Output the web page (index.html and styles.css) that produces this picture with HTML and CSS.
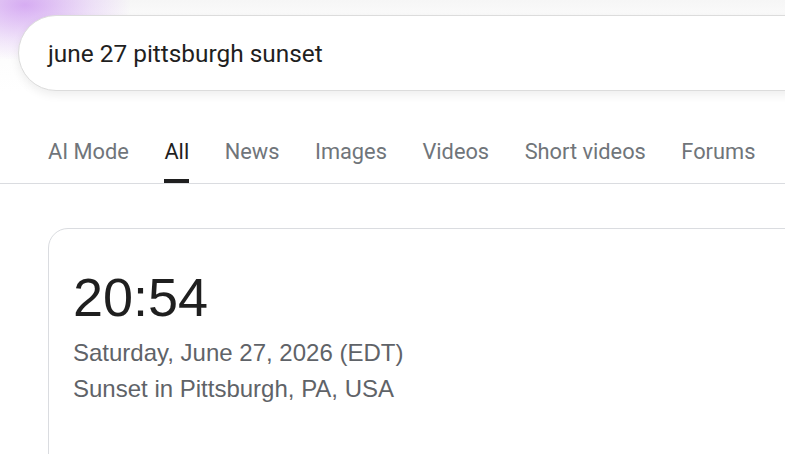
FILE: index.html
```html
<!DOCTYPE html>
<html>
<head>
<meta charset="utf-8">
<link rel="stylesheet" href="styles.css">
</head>
<body>
<header class="top">
  <div class="glow"></div>
  <div class="search">
    <span class="query">june 27 pittsburgh sunset</span>
  </div>
</header>
<nav class="tabs">
  <a class="tab">AI Mode</a>
  <a class="tab active">All</a>
  <a class="tab">News</a>
  <a class="tab">Images</a>
  <a class="tab">Videos</a>
  <a class="tab">Short videos</a>
  <a class="tab">Forums</a>
</nav>
<main class="results">
  <section class="card">
    <div class="time">20:54</div>
    <div class="sub">Saturday, June 27, 2026 (EDT)</div>
    <div class="sub">Sunset in Pittsburgh, PA, USA</div>
  </section>
</main>
</body>
</html>
```
FILE: styles.css
```css
html, body {
  margin: 0;
  padding: 0;
  overflow: hidden;
  background: #fff;
  width: 785px;
  height: 454px;
}
body {
  font-family: Roboto, "Liberation Sans", sans-serif;
}
.top {
  padding-top: 15px;
  padding-left: 18px;
  height: 77px;
  background: linear-gradient(#f6f6f6, #fafafa 15px, #fff 100%);
  position: relative;
}
.glow {
  position: absolute;
  left: -80px;
  top: -50px;
  width: 210px;
  height: 110px;
  border-radius: 50%;
  background: radial-gradient(ellipse at center, rgba(200,140,240,0.7) 0%, rgba(218,180,246,0.35) 45%, rgba(255,255,255,0) 72%);
}
.search {
  width: 900px;
  height: 74px;
  border: 1px solid #dcdcdc;
  border-radius: 38px;
  background: #fff;
  box-shadow: 0 4px 10px rgba(0,0,0,0.07);
  display: flex;
  align-items: center;
  padding-left: 29px;
  position: relative;
}
.query {
  font-size: 24.4px;
  color: #1f1f1f;
}
.tabs {
  display: flex;
  gap: 35.5px;
  padding-left: 48px;
  margin-top: 48px;
  height: 44px;
  border-bottom: 1px solid #dadce0;
  box-sizing: border-box;
  align-items: flex-start;
}
.tab {
  font-size: 21.8px;
  color: #70757a;
  line-height: 24px;
  height: 43px;
  box-sizing: border-box;
  position: relative;
}
.tab.active {
  color: #1f1f1f;
}
.tab.active::after {
  content: "";
  position: absolute;
  left: 0;
  right: 0;
  bottom: 0;
  height: 4px;
  background: #1f1f1f;
}
.results {
  padding-left: 48px;
  padding-top: 44px;
}
.card {
  width: 900px;
  height: 300px;
  border: 1px solid #dadce0;
  border-radius: 20px;
  padding: 36px 24px;
  box-sizing: border-box;
  font-family: "Liberation Sans", Arial, sans-serif;
}
.time {
  font-size: 54px;
  line-height: 64px;
  color: #1f1f1f;
  margin-bottom: 6px;
}
.sub {
  font-size: 24px;
  line-height: 36px;
  color: #5f6368;
}
```
